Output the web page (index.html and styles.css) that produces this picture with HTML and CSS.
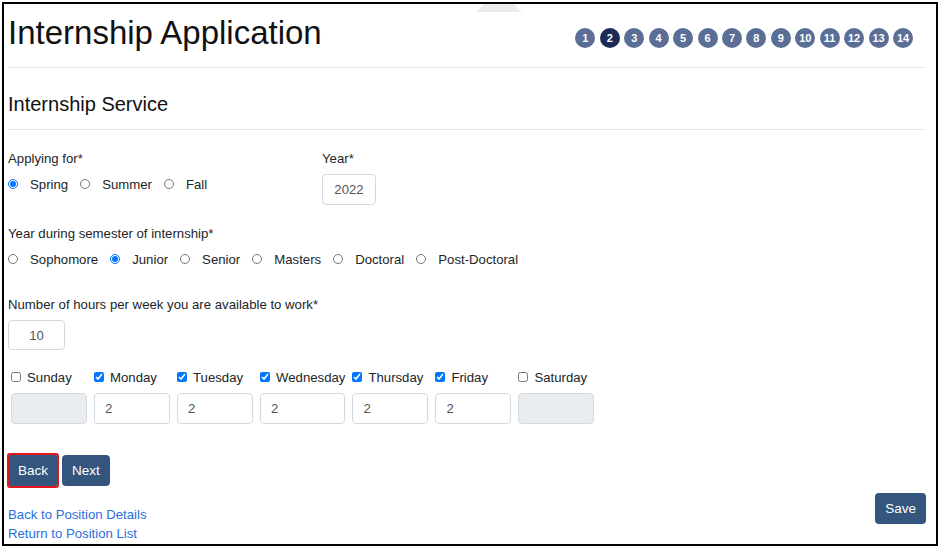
FILE: index.html
```html
<!DOCTYPE html>
<html lang="en">
<head>
<meta charset="utf-8">
<title>Internship Application</title>
<link rel="stylesheet" href="styles.css">
</head>
<body>
<div class="frame">
  <div class="wm"></div>
  <header class="top">
    <h1>Internship Application</h1>
    <ol class="steps">
      <li>1</li><li class="active">2</li><li>3</li><li>4</li><li>5</li><li>6</li><li>7</li><li>8</li><li>9</li><li>10</li><li>11</li><li>12</li><li>13</li><li>14</li>
    </ol>
  </header>
  <h2 class="section">Internship Service</h2>

  <div class="pair">
    <div class="col-applying">
      <div class="lbl">Applying for*</div>
      <div class="opts">
        <label class="opt"><input type="radio" name="term" checked>Spring</label>
        <label class="opt"><input type="radio" name="term">Summer</label>
        <label class="opt"><input type="radio" name="term">Fall</label>
      </div>
    </div>
    <div class="col-year">
      <div class="lbl">Year*</div>
      <input class="txt year" type="text" value="2022">
    </div>
  </div>

  <div class="block">
    <div class="lbl">Year during semester of internship*</div>
    <div class="opts">
      <label class="opt"><input type="radio" name="lvl">Sophomore</label>
      <label class="opt"><input type="radio" name="lvl" checked>Junior</label>
      <label class="opt"><input type="radio" name="lvl">Senior</label>
      <label class="opt"><input type="radio" name="lvl">Masters</label>
      <label class="opt"><input type="radio" name="lvl">Doctoral</label>
      <label class="opt"><input type="radio" name="lvl">Post-Doctoral</label>
    </div>
  </div>

  <div class="block hours">
    <div class="lbl">Number of hours per week you are available to work*</div>
    <input class="txt hrs" type="text" value="10">
  </div>

  <div class="days">
    <div class="day">
      <label class="day-lbl"><input type="checkbox">Sunday</label>
      <input class="txt" type="text" disabled>
    </div>
    <div class="day">
      <label class="day-lbl"><input type="checkbox" checked>Monday</label>
      <input class="txt" type="text" value="2">
    </div>
    <div class="day">
      <label class="day-lbl"><input type="checkbox" checked>Tuesday</label>
      <input class="txt" type="text" value="2">
    </div>
    <div class="day">
      <label class="day-lbl"><input type="checkbox" checked>Wednesday</label>
      <input class="txt" type="text" value="2">
    </div>
    <div class="day">
      <label class="day-lbl"><input type="checkbox" checked>Thursday</label>
      <input class="txt" type="text" value="2">
    </div>
    <div class="day">
      <label class="day-lbl"><input type="checkbox" checked>Friday</label>
      <input class="txt" type="text" value="2">
    </div>
    <div class="day">
      <label class="day-lbl"><input type="checkbox">Saturday</label>
      <input class="txt" type="text" disabled>
    </div>
  </div>

  <div class="actions">
    <button class="btn focus" type="button">Back</button>
    <button class="btn" type="button">Next</button>
  </div>

  <div class="footer">
    <div class="links">
      <a href="#">Back to Position Details</a>
      <a href="#">Return to Position List</a>
    </div>
    <button class="btn save" type="button">Save</button>
  </div>
</div>
</body>
</html>
```
FILE: styles.css
```css
* { box-sizing: border-box; }
html, body { margin: 0; padding: 0; background: #fff; }
body {
  font-family: "Liberation Sans", Arial, sans-serif;
  font-size: 13.2px;
  color: #212529;
}
.frame {
  position: relative;
  margin: 2px;
  height: 544px;
  border: 2px solid #000;
  padding: 0 10px 0 4px;
  overflow: hidden;
}
.wm {
  position: absolute;
  top: 0;
  left: 472px;
  width: 46px;
  height: 8px;
  background: #ececec;
  clip-path: polygon(18% 0, 82% 0, 100% 100%, 0 100%);
}
.top {
  display: flex;
  justify-content: space-between;
  align-items: flex-start;
  padding: 10px 0 15px;
  border-bottom: 1px solid #e8e8e8;
}
.top h1 {
  margin: 0;
  font-size: 33px;
  font-weight: 400;
  line-height: 38px;
  color: #111;
}
.steps {
  list-style: none;
  margin: 14px 13px 0 0;
  padding: 0;
  display: flex;
  gap: 4.45px;
}
.steps li {
  width: 20px;
  height: 20px;
  border-radius: 50%;
  background: #5b6e96;
  color: #fff;
  font-size: 11px;
  font-weight: 700;
  display: flex;
  align-items: center;
  justify-content: center;
}
.steps li.active { background: #1b2b57; }
.section {
  margin: 0;
  padding: 24px 0 13px;
  font-size: 20px;
  font-weight: 400;
  line-height: 24px;
  color: #111;
  border-bottom: 1px solid #e8e8e8;
}
.lbl { line-height: 16px; height: 16px; }
.pair { display: flex; margin-top: 21px; }
.col-applying { width: 314px; }
.opts {
  display: flex;
  align-items: center;
  height: 16px;
  margin-top: 9px;
}
.opt {
  display: flex;
  align-items: center;
  margin-right: 12px;
  white-space: nowrap;
}
.opt input {
  width: 10px;
  height: 10px;
  margin: 0 12px 0 0;
}
.txt {
  display: block;
  height: 31px;
  border: 1px solid #d5d9de;
  border-radius: 4px;
  font-family: "Liberation Sans", Arial, sans-serif;
  font-size: 13.2px;
  color: #555;
  padding: 0 10px;
  background: #fff;
  width: 100%;
}
.txt:disabled { background: #e9ecef; }
.year { width: 54px; margin-top: 7px; text-align: center; padding: 0; }
.block { margin-top: 21px; }
.block.hours { margin-top: 30px; }
.hrs { width: 57px; height: 30px; margin-top: 7px; text-align: center; padding: 0; }
.days {
  display: flex;
  gap: 7px;
  margin-top: 19px;
  padding-left: 3px;
}
.day {
  flex: 0 0 auto;
  min-width: 76px;
  display: flex;
  flex-direction: column;
}
.day-lbl {
  display: flex;
  align-items: center;
  height: 16px;
  white-space: nowrap;
}
.day-lbl input {
  width: 10px;
  height: 10px;
  margin: 0 6px 0 0;
}
.day .txt { margin-top: 8px; width: 0; min-width: 100%; }
.actions {
  display: flex;
  gap: 5px;
  margin-top: 31px;
  padding-left: 1px;
}
.btn {
  height: 31px;
  min-width: 48px;
  padding: 0 8px;
  border: 0;
  border-radius: 4px;
  background: #34557e;
  color: #fff;
  font-family: "Liberation Sans", Arial, sans-serif;
  font-size: 13.5px;
}
.btn.focus { outline: 2px solid #e4141b; border-radius: 1px; }
.footer {
  display: flex;
  justify-content: space-between;
  align-items: flex-start;
  margin-top: 7px;
}
.links { display: flex; flex-direction: column; margin-top: 12px; }
.links a {
  color: #2a6fdb;
  text-decoration: none;
  line-height: 19px;
}
.save { padding: 0 10px; }
```
